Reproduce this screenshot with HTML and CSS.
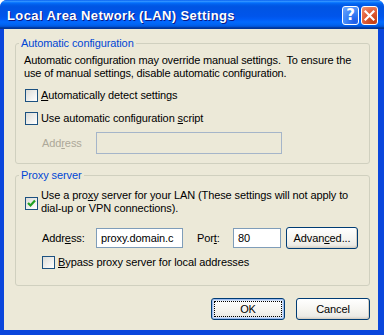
FILE: index.html
```html
<!DOCTYPE html>
<html>
<head>
<meta charset="utf-8">
<link rel="stylesheet" href="styles.css">
</head>
<body>
<div class="window">
  <div class="titlebar">
    <span class="title">Local Area Network (LAN) Settings</span>
    <div class="tbtns">
      <span class="tb help">?</span>
      <span class="tb close"><svg width="11" height="11" viewBox="0 0 11 11"><path d="M1.5 1.5 L9.5 9.5 M9.5 1.5 L1.5 9.5" stroke="#fff" stroke-width="2.2" stroke-linecap="square"/></svg></span>
    </div>
  </div>
  <div class="body">
    <fieldset class="group g1">
      <legend>Automatic configuration</legend>
      <p class="desc">Automatic configuration may override manual settings.&nbsp; To ensure the<br>use of manual settings, disable automatic configuration.</p>
      <div class="check c1"><span class="box"></span><span class="ctext"><u>A</u>utomatically detect settings</span></div>
      <div class="check c2"><span class="box"></span><span class="ctext">Use automatic configuration <u>s</u>cript</span></div>
      <div class="row r1"><span class="lbl dis">Add<u>r</u>ess</span><span class="input dinput"></span></div>
    </fieldset>
    <fieldset class="group g2">
      <legend>Proxy server</legend>
      <div class="check c3"><span class="box checked"><svg width="11" height="11" viewBox="0 0 11 11"><path d="M2 5 L4.5 7.5 L9 2.5" fill="none" stroke="#21A121" stroke-width="2.2"/></svg></span><span class="ctext">Use a pro<u>x</u>y server for your LAN (These settings will not apply to<br>dial-up or VPN connections).</span></div>
      <div class="row r2">
        <span class="lbl">Addr<u>e</u>ss:</span>
        <span class="input ainput">proxy.domain.c</span>
        <span class="lbl plbl">Por<u>t</u>:</span>
        <span class="input pinput">80</span>
        <span class="btn adv">Advan<u>c</u>ed...</span>
      </div>
      <div class="check c4"><span class="box"></span><span class="ctext"><u>B</u>ypass proxy server for local addresses</span></div>
    </fieldset>
    <div class="buttons">
      <span class="btn ok"><span class="focus">OK</span></span>
      <span class="btn cancel">Cancel</span>
    </div>
  </div>
</div>
</body>
</html>
```

FILE: styles.css
```css
html, body {
  margin: 0;
  padding: 0;
  background: #ffffff;
}
.window {
  width: 384px;
  height: 335px;
  display: flex;
  flex-direction: column;
  font-family: "Liberation Sans", Arial, sans-serif;
  font-size: 11px;
  letter-spacing: -0.1px;
  color: #000;
  background: #0a46dc;
  border-radius: 7px 7px 0 0;
  overflow: hidden;
  white-space: nowrap;
}
.titlebar {
  height: 29px;
  flex: none;
  display: flex;
  align-items: center;
  padding: 0 6px 0 7px;
  background: linear-gradient(180deg, #0058ee 0%, #3593ff 4%, #288eff 6%, #127dff 8%, #036ffc 10%, #0262ee 14%, #0057e5 20%, #0054e3 24%, #0055eb 56%, #005bf5 66%, #026afe 76%, #0062ef 86%, #0052d6 92%, #0040ab 94%, #003092 100%);
}
.title {
  flex: 1;
  color: #fff;
  font-weight: bold;
  font-size: 13px;
  letter-spacing: 0.4px;
  text-shadow: 1px 1px 0 #0a1883;
  padding-top: 1px;
}
.tbtns {
  display: flex;
  gap: 2px;
  margin-top: 1px;
}
.tb {
  width: 17px;
  height: 19px;
  box-sizing: border-box;
  border: 1px solid #fff;
  border-radius: 3px;
  display: flex;
  align-items: center;
  justify-content: center;
  color: #fff;
}
.help {
  background: radial-gradient(circle at 80% 85%, #1b5ae8 0%, #3e86f7 50%, #6ea6ff 100%);
  font-weight: bold;
  font-size: 15px;
  font-family: "DejaVu Sans", sans-serif;
}
.close {
  background: radial-gradient(circle at 80% 85%, #c43d12 0%, #e2603a 55%, #f29577 100%);
}
.body {
  flex: 1;
  background: #ece9d8;
  margin: 0 6px 5px 4px;
  display: flex;
  flex-direction: column;
  padding-top: 8px;
}
.group {
  margin: 0 8px 0 11px;
  border: 1px solid #d0d0bf;
  border-radius: 3px;
  padding: 4px 8px 9px 9px;
  min-width: 0;
}
.group legend {
  color: #0046d5;
  padding: 0 2px;
  margin-left: -6px;
  line-height: 13px;
}
.desc {
  margin: 0 0 0 -1px;
  line-height: 13px;
  letter-spacing: -0.15px;
}
.check {
  display: flex;
  align-items: center;
  line-height: 13px;
}
.box {
  width: 13px;
  height: 13px;
  box-sizing: border-box;
  border: 1px solid #1c5180;
  background: linear-gradient(135deg, #dcdcd7 0%, #ffffff 100%);
  margin-right: 3px;
  flex: none;
  display: flex;
  align-items: center;
  justify-content: center;
}
.c1 { margin-top: 9px; }
.c2 { margin-top: 10px; }
.row {
  display: flex;
  align-items: center;
}
.r1 { margin-top: 7px; }
.lbl {
  margin-left: 17px;
  width: 54px;
  flex: none;
}
.lbl.dis { color: #aca899; }
.input {
  box-sizing: border-box;
  border: 1px solid #7f9db9;
  background: #fff;
  padding: 0 4px;
  display: flex;
  align-items: center;
  line-height: 13px;
}
.dinput {
  width: 186px;
  height: 22px;
  background: #ece9d8;
  border-color: #a5b5c9;
}
.g2 {
  margin-top: 5px;
  padding-top: 7px;
  padding-bottom: 16px;
}
.c3 .box { margin-top: 3px; }
.r2 { margin-top: 12px; }
.ainput {
  width: 87px;
  height: 20px;
}
.plbl {
  margin-left: 14px;
  width: 36px;
}
.pinput {
  width: 48px;
  height: 20px;
}
.btn {
  box-sizing: border-box;
  border: 1px solid #003c74;
  border-radius: 3px;
  background: linear-gradient(180deg, #ffffff 0%, #f4f3ee 60%, #ecebe6 86%, #d6d0c5 100%);
  box-shadow: inset -1px -1px 0 #d6d0c5;
  display: flex;
  align-items: center;
  justify-content: center;
  height: 22px;
  line-height: 13px;
}
.adv {
  width: 72px;
  margin-left: 5px;
}
.c4 {
  margin-top: 7px;
  margin-left: 17px;
}
.buttons {
  display: flex;
  justify-content: flex-end;
  gap: 11px;
  margin: 12px 8px 0 0;
}
.ok, .cancel {
  width: 74px;
  height: 22px;
}
.ok {
  box-shadow: inset 0 0 0 1px #9dbcf0, inset 0 0 0 2px #d4e2f8;
}
.focus {
  box-sizing: border-box;
  width: 68px;
  height: 16px;
  border: 1px dotted #000;
  display: flex;
  align-items: center;
  justify-content: center;
}
```
